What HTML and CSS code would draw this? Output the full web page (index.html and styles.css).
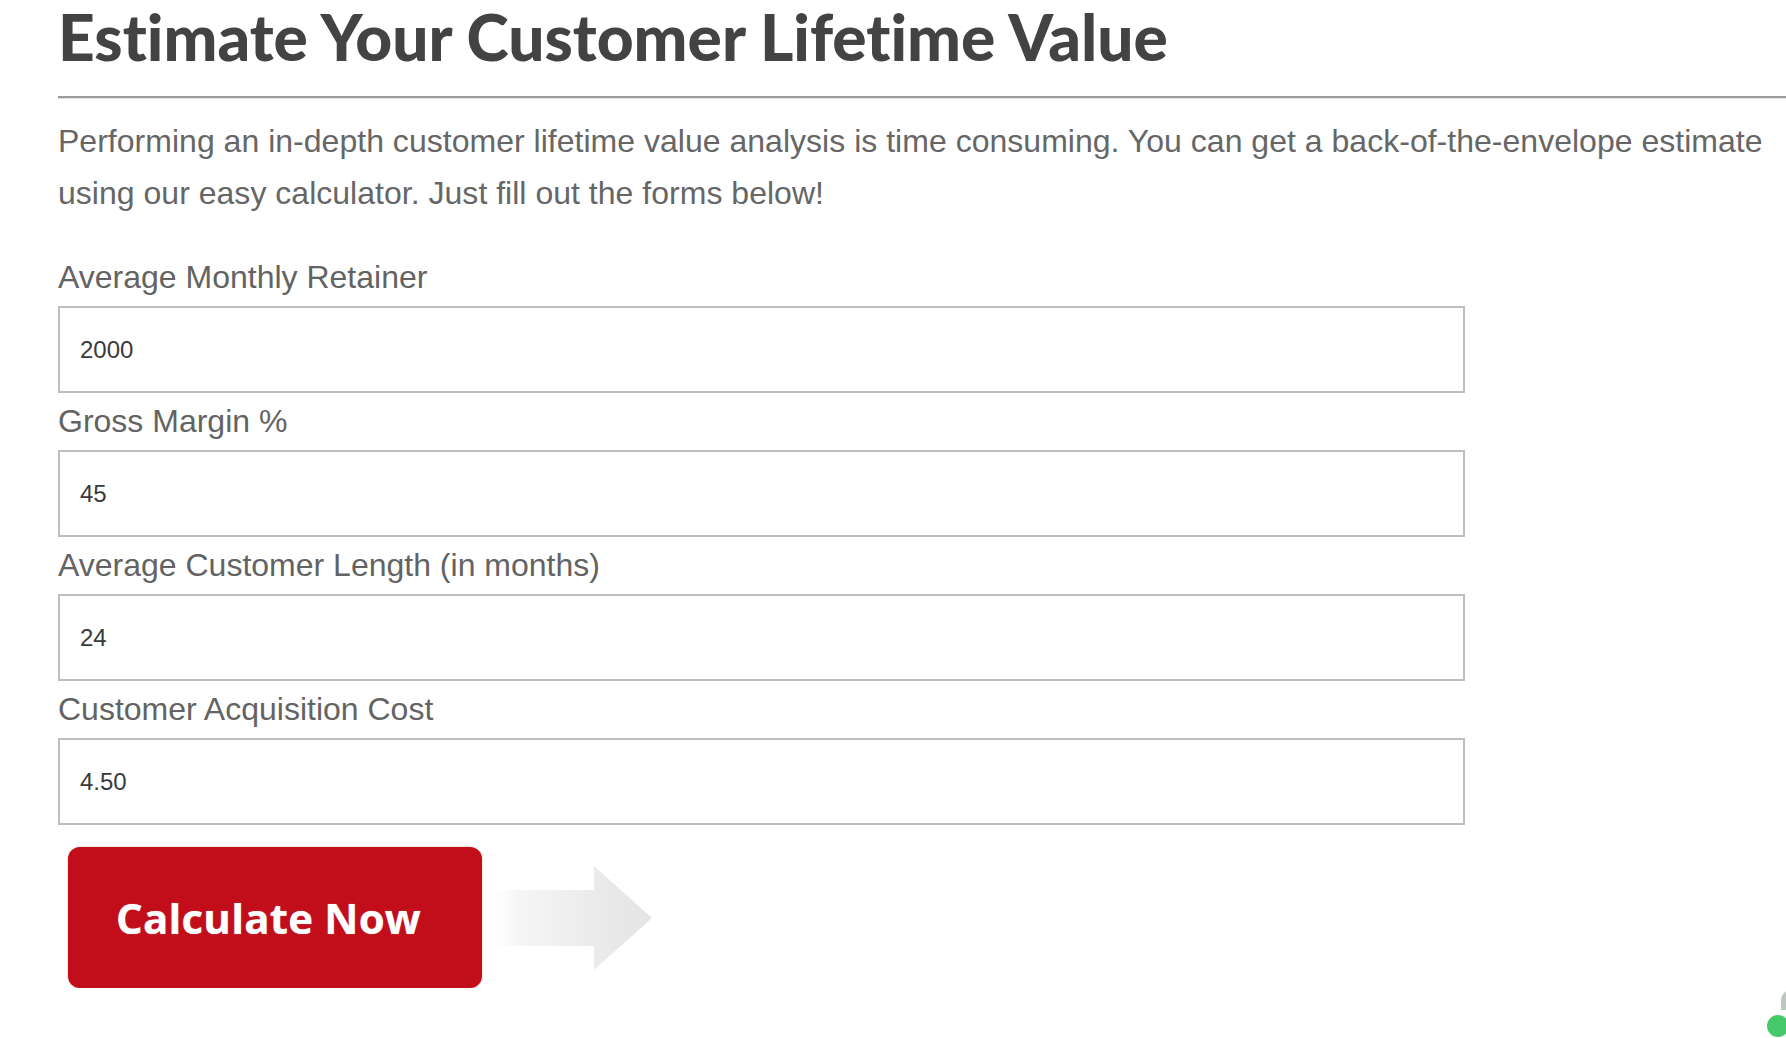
FILE: index.html
```html
<!DOCTYPE html>
<html lang="en">
<head>
<meta charset="utf-8">
<title>Estimate Your Customer Lifetime Value</title>
<link rel="stylesheet" href="styles.css">
</head>
<body>
<main class="page">
  <h1 class="title">Estimate Your Customer Lifetime Value</h1>
  <hr class="rule">
  <p class="intro">Performing an in-depth customer lifetime value analysis is time consuming. You can get a back-of-the-envelope estimate using our easy calculator. Just fill out the forms below!</p>
  <form class="calc">
    <label class="field-label" for="retainer">Average Monthly Retainer</label>
    <input class="field" id="retainer" type="text" value="2000">
    <label class="field-label" for="margin">Gross Margin %</label>
    <input class="field" id="margin" type="text" value="45">
    <label class="field-label" for="length">Average Customer Length (in months)</label>
    <input class="field" id="length" type="text" value="24">
    <label class="field-label" for="cac">Customer Acquisition Cost</label>
    <input class="field" id="cac" type="text" value="4.50">
    <div class="actions">
      <button class="calc-btn" type="button">Calculate Now</button>
      <svg class="arrow" width="170" height="104" viewBox="0 0 170 104" aria-hidden="true">
        <defs>
          <linearGradient id="ag" x1="0" y1="0" x2="1" y2="0">
            <stop offset="0" stop-color="#ffffff" stop-opacity="0"/>
            <stop offset="0.2" stop-color="#f6f6f6"/>
            <stop offset="0.6" stop-color="#ececec"/>
            <stop offset="1" stop-color="#e4e4e4"/>
          </linearGradient>
        </defs>
        <path d="M0 24 H110 V0 L168 52 L110 104 V80 H0 Z" fill="url(#ag)"/>
      </svg>
    </div>
  </form>
</main>
<div class="widget" aria-hidden="true">
  <span class="widget-tip"></span>
  <span class="widget-dot"></span>
</div>
</body>
</html>
```

FILE: styles.css
```css
html, body {
  margin: 0;
  padding: 0;
  background: #ffffff;
  overflow: hidden;
}

body {
  font-family: "Liberation Sans", Arial, Helvetica, sans-serif;
  color: #666666;
}

.page {
  width: 1790px;
  padding-left: 58px;
}

.title {
  margin: 0;
  font-family: Lato, "Liberation Sans", sans-serif;
  font-weight: 900;
  font-size: 64px;
  line-height: 74px;
  letter-spacing: 0;
  font-variant-ligatures: none;
  color: #434343;
}

.rule {
  margin: 22px 0 0 0;
  height: 0;
  border: 0;
  border-top: 2px solid #9b9b9b;
  border-bottom: 1px solid #e2e2e2;
}

.intro {
  max-width: 1740px;
  margin: 16px 0 0 0;
  font-size: 32px;
  line-height: 52px;
  letter-spacing: 0.02px;
  color: #666666;
}

.calc {
  margin-top: 30px;
  display: flex;
  flex-direction: column;
  align-items: flex-start;
}

.field-label {
  display: block;
  font-size: 32px;
  line-height: 57px;
  color: #636363;
}

.field {
  box-sizing: border-box;
  width: 1407px;
  height: 87px;
  margin: 0;
  padding: 0 0 0 20px;
  border: 2px solid #bcbfc2;
  border-radius: 0;
  background: #ffffff;
  font-family: "Liberation Sans", Arial, sans-serif;
  font-size: 24px;
  color: #3a3a3a;
  outline: none;
}

.actions {
  display: flex;
  align-items: center;
  gap: 2px;
  margin-top: 22px;
  margin-left: 10px;
}

.calc-btn {
  box-sizing: border-box;
  width: 414px;
  height: 141px;
  padding: 0 0 0 48px;
  display: flex;
  align-items: center;
  border: 0;
  border-radius: 12px;
  background: #c20e1b;
  box-shadow: 0 0 2px rgba(120, 0, 0, 0.35);
  font-family: "Open Sans", "Noto Sans", sans-serif;
  font-weight: 700;
  font-size: 42px;
  letter-spacing: 0.2px;
  color: #ffffff;
  text-shadow: 0 0 1px rgba(255, 255, 255, 0.6);
  cursor: pointer;
}

.arrow {
  display: block;
}

.widget {
  position: fixed;
  left: 1767px;
  top: 990px;
  width: 30px;
  height: 60px;
}

.widget-tip {
  position: absolute;
  left: 14px;
  top: 0;
  width: 10px;
  height: 20px;
  border-radius: 10px 0 0 0;
  background: #b9c9bd;
}

.widget-dot {
  position: absolute;
  left: 0;
  top: 25px;
  width: 22px;
  height: 22px;
  border-radius: 50%;
  background: #45c96b;
}
```
